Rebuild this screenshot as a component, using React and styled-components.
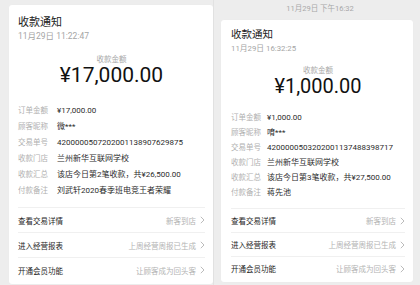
import styled, { createGlobalStyle } from "styled-components";

const GlobalStyle = createGlobalStyle`
  body {
    margin: 0;
    background: #ededed;
    font-family: Roboto, "Noto Sans CJK SC", sans-serif;
  }
`;

const LEFT = {
  padT: 10, padL: 9, padR: 8, titleFs: 11, titleLh: 16, dateFs: 8.5, dateLh: 11,
  dateMt: 0, capMt: 12, capLh: 11, amtFs: 21, amtLh: 21, rowsMt: 17, rowH: 16,
  labelW: 39, sepMt: 8, linkH: 24,
};

const RIGHT = {
  padT: 8, padL: 10, padR: 8, titleFs: 10.5, titleLh: 14, dateFs: 7.8, dateLh: 11,
  dateMt: 1, capMt: 11, capLh: 11, amtFs: 20, amtLh: 20, rowsMt: 14, rowH: 15,
  labelW: 36, sepMt: 8, linkH: 23,
};

const receipts = [
  {
    time: null,
    date: "11月29日 11:22:47",
    amount: "¥17,000.00",
    rows: [
      ["订单金额", "¥17,000.00"],
      ["顾客昵称", "微***"],
      ["交易单号", "4200000507202001138907629875"],
      ["收款门店", "兰州新华互联网学校"],
      ["收款汇总", "该店今日第2笔收款，共¥26,500.00"],
      ["付款备注", "刘武轩2020春季班电竞王者荣耀"],
    ],
    s: LEFT,
  },
  {
    time: "11月29日 下午16:32",
    date: "11月29日 16:32:25",
    amount: "¥1,000.00",
    rows: [
      ["订单金额", "¥1,000.00"],
      ["顾客昵称", "唷***"],
      ["交易单号", "4200000503202001137488398717"],
      ["收款门店", "兰州新华互联网学校"],
      ["收款汇总", "该店今日第3笔收款，共¥27,500.00"],
      ["付款备注", "蒋先池"],
    ],
    s: RIGHT,
  },
];

const links = [
  ["查看交易详情", "新客到店"],
  ["进入经营报表", "上周经营周报已生成"],
  ["开通会员功能", "让顾客成为回头客"],
];

const Page = styled.div`
  display: flex;
  width: 420px;
  height: 285px;
  overflow: hidden;
  background: #ededed;
`;

const Shot = styled.div`
  flex: none;
  box-sizing: border-box;
  width: ${(p) => p.$w}px;
  padding: ${(p) => p.$pad};
  display: flex;
  flex-direction: column;
  border-right: ${(p) => (p.$edge ? "1px solid #e2e2e2" : "none")};
`;

const TimeStamp = styled.div`
  height: 20px;
  line-height: 18px;
  text-align: center;
  font-size: 7.5px;
  color: #a8a8a8;
  padding-left: 6px;
`;

const Card = styled.div`
  background: #fff;
  border-radius: 3px;
  padding: ${(p) => `${p.$s.padT}px ${p.$s.padR}px 2px ${p.$s.padL}px`};
  box-shadow: 0 0 1px rgba(0, 0, 0, 0.04);
`;

const Title = styled.div`
  font-size: ${(p) => p.$s.titleFs}px;
  line-height: ${(p) => p.$s.titleLh}px;
  color: #1b1b1b;
`;

const DateLine = styled.div`
  margin-top: ${(p) => p.$s.dateMt}px;
  font-size: ${(p) => p.$s.dateFs}px;
  line-height: ${(p) => p.$s.dateLh}px;
  color: #a5a5a5;
`;

const AmountCaption = styled.div`
  margin-top: ${(p) => p.$s.capMt}px;
  font-size: 7.5px;
  line-height: ${(p) => p.$s.capLh}px;
  color: #a8a8a8;
  text-align: center;
`;

const Amount = styled.div`
  font-size: ${(p) => p.$s.amtFs}px;
  line-height: ${(p) => p.$s.amtLh}px;
  color: #111;
  text-align: center;
`;

const Rows = styled.div`
  margin-top: ${(p) => p.$s.rowsMt}px;
  padding-bottom: ${(p) => p.$s.sepMt}px;
`;

const Row = styled.div`
  display: flex;
  height: ${(p) => p.$s.rowH}px;
  line-height: ${(p) => p.$s.rowH}px;
  font-size: 8px;
  white-space: nowrap;
`;

const Label = styled.span`
  flex: none;
  width: ${(p) => p.$s.labelW}px;
  font-size: 7.5px;
  color: #b0b0b0;
`;

const Value = styled.span`
  color: #2c2c2c;
`;

const LinkRow = styled.div`
  display: flex;
  align-items: center;
  height: ${(p) => p.$s.linkH}px;
  border-top: 1px solid #f0f0f0;
  font-size: 7.5px;
`;

const LinkText = styled.span`
  flex: 1;
  color: #1e1e1e;
`;

const LinkHint = styled.span`
  color: #b3b3b3;
  margin-right: 4px;
`;

const Chevron = () => (
  <svg width="5" height="8" viewBox="0 0 5 8">
    <path d="M0.8 0.8 L4 4 L0.8 7.2" fill="none" stroke="#b3b3b3" strokeWidth="0.9" />
  </svg>
);

const Receipt = ({ data }) => {
  const s = data.s;
  return (
    <Card $s={s}>
      <Title $s={s}>收款通知</Title>
      <DateLine $s={s}>{data.date}</DateLine>
      <AmountCaption $s={s}>收款金额</AmountCaption>
      <Amount $s={s}>{data.amount}</Amount>
      <Rows $s={s}>
        {data.rows.map(([k, v]) => (
          <Row key={k} $s={s}>
            <Label $s={s}>{k}</Label>
            <Value>{v}</Value>
          </Row>
        ))}
      </Rows>
      {links.map(([t, h]) => (
        <LinkRow key={t} $s={s}>
          <LinkText>{t}</LinkText>
          <LinkHint>{h}</LinkHint>
          <Chevron />
        </LinkRow>
      ))}
    </Card>
  );
};

export default function App() {
  return (
    <>
      <GlobalStyle />
      <Page>
        <Shot $w={214} $pad="5px 0 0 9px" $edge>
          <Receipt data={receipts[0]} />
        </Shot>
        <Shot $w={206} $pad="0 7px">
          <TimeStamp>{receipts[1].time}</TimeStamp>
          <Receipt data={receipts[1]} />
        </Shot>
      </Page>
    </>
  );
}
